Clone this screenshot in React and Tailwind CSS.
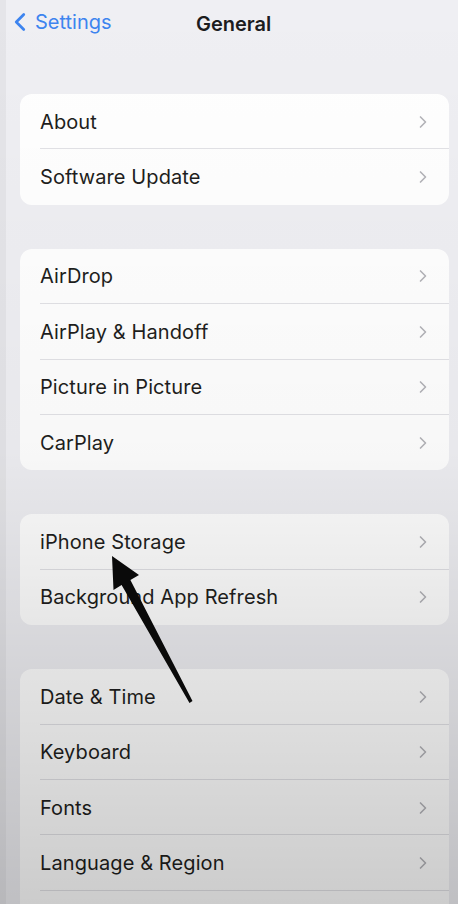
import { ChevronLeft, ChevronRight } from 'lucide-react';

const groups = [
  { mt: 'mt-[50px]', items: ['About', 'Software Update'] },
  { mt: 'mt-[44px]', items: ['AirDrop', 'AirPlay & Handoff', 'Picture in Picture', 'CarPlay'] },
  { mt: 'mt-[44px]', items: ['iPhone Storage', 'Background App Refresh'] },
  { mt: 'mt-[44px]', items: ['Date & Time', 'Keyboard', 'Fonts', 'Language & Region', ''] },
];

const Row = ({ label, last }) => (
  <div className="relative flex h-[55.4px] items-center pl-[20px] pr-[16px]">
    <span className="flex-1 text-[20px] text-[#1e1e20] tracking-[0.1px]">{label}</span>
    <ChevronRight className="h-[20px] w-[20px] text-[#b4b4b9]" strokeWidth={2} />
    {!last && <div className="absolute bottom-0 left-[20px] right-0 h-px bg-[#e2e2e6]" />}
  </div>
);

export default function App() {
  return (
    <div
      className="relative h-[904px] w-[458px] overflow-hidden bg-[#efeff3]"
      style={{ fontFamily: 'Inter, "Liberation Sans", sans-serif' }}
    >
      {/* nav bar */}
      <div className="relative flex h-[44px] items-center">
        <div className="flex items-center pl-[5px] text-[#3d84ef]">
          <ChevronLeft className="h-[30px] w-[30px]" strokeWidth={2.2} />
          <span className="-ml-[0px] text-[20px]">Settings</span>
        </div>
        <span className="absolute left-[196px] top-[9px] text-[20px] font-semibold text-[#1c1c1e]">General</span>
      </div>

      {groups.map((g, gi) => (
        <div key={gi} className={`${g.mt} ml-[20px] mr-[9px] overflow-hidden rounded-[12px] bg-white`}>
          {g.items.map((label, i) => (
            <Row key={i} label={label} last={i === g.items.length - 1} />
          ))}
        </div>
      ))}

      {/* video vignette */}
      <div className="pointer-events-none absolute inset-0 bg-gradient-to-b from-transparent via-black/[0.03] to-black/[0.2]" />
      <div className="pointer-events-none absolute inset-y-0 left-0 w-[6px] bg-black/[0.04]" />

      {/* annotation arrow */}
      <svg className="pointer-events-none absolute inset-0" width="458" height="904" viewBox="0 0 458 904">
        <polygon
          points="112,556 139,575 130.4,580.1 192.5,701 189.5,703 121.6,584.9 113.5,590"
          fill="#0a0a0a"
        />
      </svg>
    </div>
  );
}
